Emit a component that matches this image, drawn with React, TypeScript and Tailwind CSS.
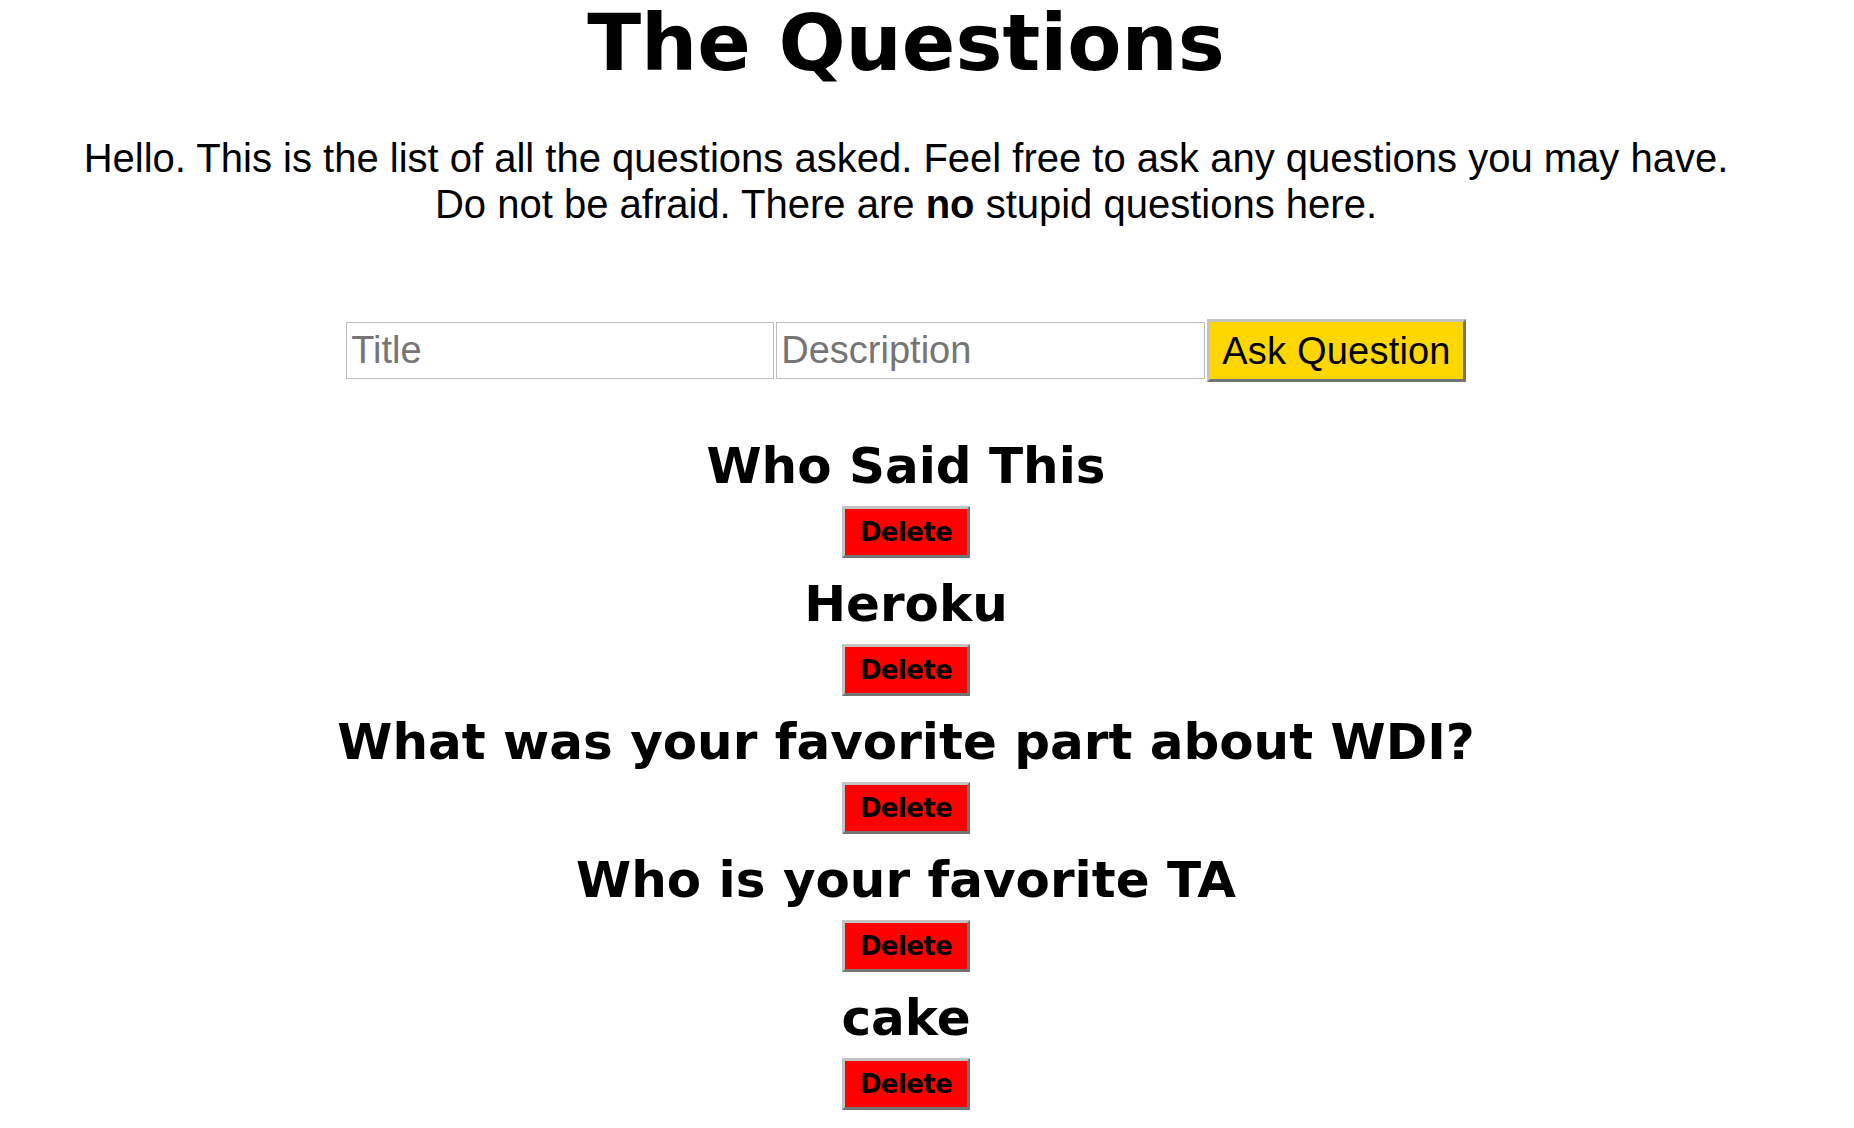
import React from "react";

const questions = [
  "Who Said This",
  "Heroku",
  "What was your favorite part about WDI?",
  "Who is your favorite TA",
  "cake",
];

const verdana = "font-['Verdana','DejaVu_Sans',sans-serif]";
const helvetica = "font-['Helvetica','Liberation_Sans',Arial,sans-serif]";

const App: React.FC = () => {
  return (
    <div className="w-[1812px] min-h-screen bg-white text-black flex flex-col items-center text-center">
      <h1 className={`${verdana} font-bold text-[79px] leading-[84px] pt-[1px]`}>
        The Questions
      </h1>
      <p className={`${helvetica} text-[40px] leading-[46px] mt-[50px]`}>
        Hello. This is the list of all the questions asked. Feel free to ask
        any questions you may have.
        <br />
        Do not be afraid. There are <b>no</b> stupid questions here.
      </p>

      <form
        className={`${helvetica} flex items-center gap-[2px] mt-[92px]`}
        onSubmit={(e) => e.preventDefault()}
      >
        <input
          placeholder="Title"
          className="w-[428px] h-[57px] border border-[#bdbdbd] px-[4px] text-[38px] leading-[44px] placeholder:text-[#757575] outline-none"
        />
        <input
          placeholder="Description"
          className="w-[429px] h-[57px] border border-[#bdbdbd] px-[4px] text-[38px] leading-[44px] placeholder:text-[#757575] outline-none"
        />
        <button
          type="submit"
          className="h-[63px] bg-[#ffd700] border-[3px] border-t-[#c3c3c3] border-l-[#c3c3c3] border-r-[#737373] border-b-[#737373] px-[12px] text-[38px] tracking-[0.2px] leading-[44px]"
        >
          Ask Question
        </button>
      </form>

      <div className="mt-[55px] flex flex-col items-center">
        {questions.map((q) => (
          <div key={q} className="flex flex-col items-center mb-[17px]">
            <h2 className={`${verdana} font-bold text-[50px] leading-[58px]`}>
              {q}
            </h2>
            <button
              className={`${verdana} mt-[11px] bg-[#ff0000] border-[3px] border-t-[#c3c3c3] border-l-[#c3c3c3] border-r-[#737373] border-b-[#737373] px-[15px] py-[8px] font-bold text-[26px] tracking-[-0.6px] leading-[30px]`}
            >
              Delete
            </button>
          </div>
        ))}
      </div>
    </div>
  );
};

export default App;
